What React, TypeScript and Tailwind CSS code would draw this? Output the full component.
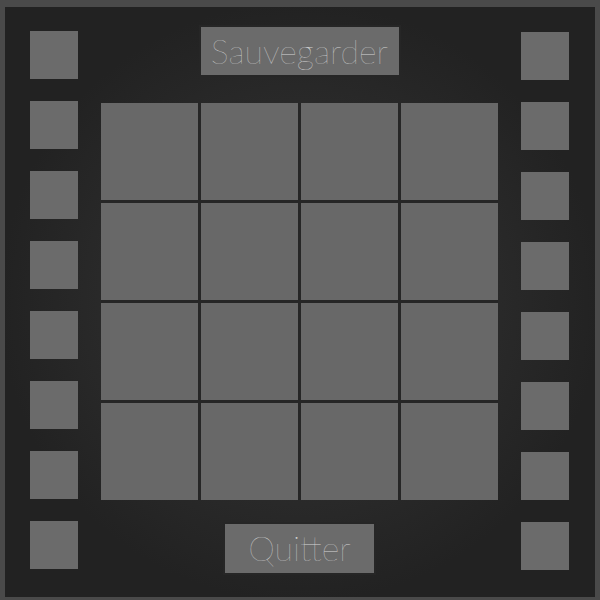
const SIDE = [0, 1, 2, 3, 4, 5, 6, 7];
const CELLS = Array.from({ length: 16 }, (_, i) => i);

function SideColumn({ offset }: { offset: string }) {
  return (
    <div className={`flex flex-col gap-[22px] ${offset}`}>
      {SIDE.map((i) => (
        <div key={i} className="h-[48px] w-[48px] bg-[#6b6b6b]" />
      ))}
    </div>
  );
}

export default function App() {
  return (
    <div className="h-[600px] w-[600px] bg-[#4a4a4a] pl-[5px] pt-[7px] font-['Lato','Helvetica_Neue',sans-serif]">
      <div className="flex h-[590px] w-[590px] bg-[radial-gradient(circle_at_center,#3a3a3a_0%,#2a2a2a_45%,#222222_72%)]">
        <SideColumn offset="ml-[25px] mt-[24px]" />

        <div className="ml-[23px] flex w-[397px] flex-col items-center pt-[18px]">
          <button
            type="button"
            className="flex h-[52px] w-[202px] items-center justify-center border-2 border-[#262626] bg-[#6b6b6b] pb-[1px] text-[34px] font-thin leading-none text-[#d4d4d4]"
          >
            Sauvegarder
          </button>

          <div className="mt-[26px] grid grid-cols-4 gap-[3px] bg-[#262626]">
            {CELLS.map((i) => (
              <div key={i} className="h-[97px] w-[97px] bg-[#686868]" />
            ))}
          </div>

          <button
            type="button"
            className="mt-[22px] flex h-[53px] w-[153px] items-center justify-center border-2 border-[#262626] bg-[#6b6b6b] pb-[1px] text-[34px] font-thin leading-none text-[#d4d4d4]"
          >
            Quitter
          </button>
        </div>

        <SideColumn offset="ml-[23px] mt-[25px]" />
      </div>
    </div>
  );
}
